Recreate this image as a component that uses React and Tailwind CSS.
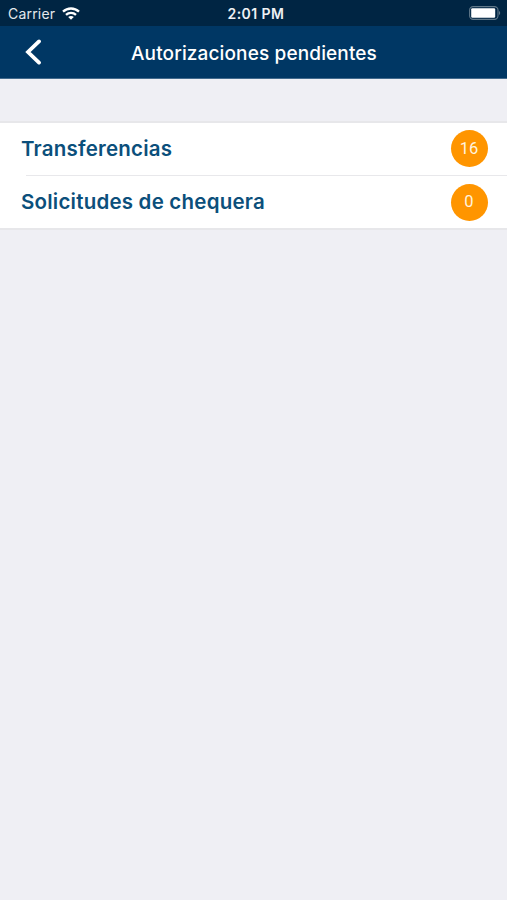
const items = [
    { id: 'transferencias', label: 'Transferencias', count: 16 },
    { id: 'chequera', label: 'Solicitudes de chequera', count: 0 },
];

const WifiIcon = () => (
    <svg className="w-[18px] h-[13px]" viewBox="0 0 18 13" fill="none" stroke="white" strokeWidth="2.3">
        <path d="M1 4.7C5.5 0.4 12.5 0.4 17 4.7" />
        <path d="M4 7.9C6.8 5.2 11.2 5.2 14 7.9" />
        <path d="M9 12.8L6.2 10C7.8 8.5 10.2 8.5 11.8 10Z" fill="white" stroke="none" />
    </svg>
);

const BatteryIcon = () => (
    <svg className="w-8 h-[14px]" viewBox="0 0 32 14" fill="none">
        <rect x="0.6" y="0.6" width="28.4" height="12.8" rx="3.6" stroke="#607889" strokeWidth="1.1" />
        <rect x="2.2" y="2.2" width="24" height="9.6" rx="1.2" fill="white" />
        <path d="M30 5C31.6 5.5 31.6 8.5 30 9Z" fill="#607889" />
    </svg>
);

export default function App() {
    return (
        <div className="min-h-screen bg-[#efeff4] font-['Inter',sans-serif]">
            <header className="h-[79px] bg-[#003764] text-white border-b border-[#426a8d]">
                <div className="h-[26px] bg-[#002543] grid grid-cols-3 items-center pl-2 pr-1.5">
                    <div className="flex items-center gap-[7px] text-[14px] tracking-[0.2px] text-[#e4e9ed]">
                        <span className="pt-px">Carrier</span>
                        <WifiIcon />
                    </div>
                    <span className="pl-[3px] pt-px text-center text-[14px] font-semibold tracking-[0.45px] text-[#eef1f4]">2:01 PM</span>
                    <div className="flex justify-end">
                        <BatteryIcon />
                    </div>
                </div>
                <div className="h-[52px] grid grid-cols-[60px_1fr_60px] items-center">
                    <button className="pl-6" aria-label="Atrás">
                        <svg className="w-[18px] h-[26px]" viewBox="0 0 18 26" fill="none" stroke="white" strokeWidth="3.8" strokeLinecap="round">
                            <path d="M15 2.4L4 13L15 23.6" />
                        </svg>
                    </button>
                    <h1 className="pt-1 pl-px text-center text-[19px] font-medium tracking-[0.13px]">Autorizaciones pendientes</h1>
                </div>
            </header>

            <ul className="mt-[42px] bg-white border-t-2 border-b-2 border-[#e7e7ea]">
                {items.map((item, i) => (
                    <li key={item.id}>
                        {i > 0 && <div className="ml-[26px] h-px bg-[#e8e8eb]" />}
                        <div className="h-[52px] pl-[21px] pr-[19.5px] flex items-center justify-between">
                            <span className="pt-px text-[20.5px] font-semibold tracking-[0.22px] text-[#0b4f7b]">{item.label}</span>
                            <span className={`w-[37px] h-[37px] rounded-full bg-[#ff9500] text-[#fff3df] font-['Roboto',sans-serif] text-[16.5px] flex items-center justify-center ${i > 0 ? 'mt-px' : 'mb-px pt-px'}`}>{item.count}</span>
                        </div>
                    </li>
                ))}
            </ul>
        </div>
    );
}
